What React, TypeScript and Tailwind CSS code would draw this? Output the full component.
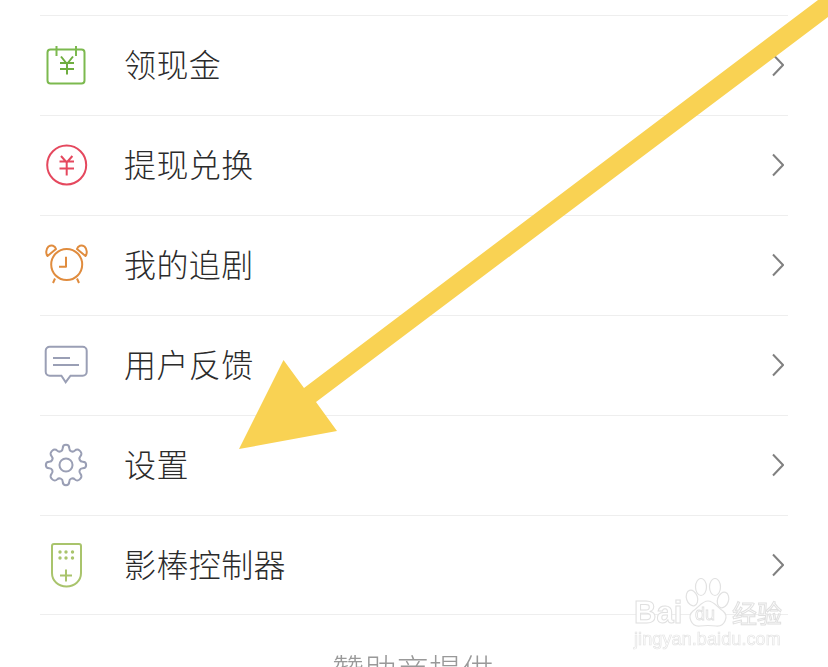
import type { ReactNode } from 'react'

const CJK = "font-['Noto_Sans_CJK_SC','Noto_Sans',sans-serif]"
const LATIN = "font-['Liberation_Sans',sans-serif]"

function CalendarIcon() {
  return (
    <svg width="48" height="48" viewBox="0 0 48 48" fill="none" stroke="#7cb94f" strokeWidth="2">
      <rect x="5.5" y="8.5" width="37" height="34" rx="3" />
      <path d="M14.5 5v10M34 5v10" />
      <path d="M19 15.500 25 23l6-7.500M25 23v10.500M18 22h14M18 28h14" stroke="#6fae3f" />
    </svg>
  )
}

function YuanIcon() {
  return (
    <svg width="48" height="48" viewBox="0 0 48 48" fill="none" stroke="#e5485e" strokeWidth="2">
      <circle cx="24.7" cy="24" r="19.5" />
      <path d="M19 15 24.700 21.500 30.400 15M24.700 21.500V34.500M17.500 20.500h14.500M17.500 27.500h14.500" />
    </svg>
  )
}

function AlarmIcon() {
  return (
    <svg width="48" height="48" viewBox="0 0 48 48" fill="none" stroke="#e08c3e" strokeWidth="2" strokeLinejoin="round">
      <circle cx="24.7" cy="23.500" r="15.500" />
      <path d="M24 15.700v10h-7" />
      <path d="M5.500 15C3.500 12.500 4 8 6.500 5.500 9.500 3.500 13 4.500 14 8Z" />
      <path d="M43.500 15C45.500 12.500 45 8 42.500 5.500 39.500 3.500 36 4.500 35 8Z" />
      <path d="M13 37.500 11 42M35 37.500 37 42" />
    </svg>
  )
}

function FeedbackIcon() {
  return (
    <svg width="48" height="48" viewBox="0 0 48 48" fill="none" stroke="#9a9fb5" strokeWidth="2">
      <path d="M7.700 5.700h33a4 4 0 0 1 4 4v21a4 4 0 0 1-4 4H28.500l-4.800 6.500-4.300-6.500H7.700a4 4 0 0 1-4-4v-21a4 4 0 0 1 4-4Z" />
      <path d="M11 17h17M11 24h26" />
    </svg>
  )
}

// eight rounded teeth around the centre, same shape as the reference gear
function GearIcon() {
  return (
    <svg width="48" height="48" viewBox="-0.5 -0.5 25 25" fill="none" stroke="#9a9fb5" strokeWidth="1.050" strokeLinejoin="round">
      <path d="M12 1.500c1 0 1.700.8 1.700 1.800 0 1.500 1.800 2.300 2.900 1.200.7-.7 1.800-.7 2.500 0l.4.400c.7.700.7 1.800 0 2.500-1.100 1.100-.3 2.900 1.200 2.900 1 0 1.800.7 1.800 1.700s-.8 1.700-1.800 1.700c-1.500 0-2.300 1.800-1.200 2.900.7.700.7 1.800 0 2.500l-.4.400c-.7.700-1.800.7-2.500 0-1.100-1.100-2.900-.3-2.900 1.200 0 1-.7 1.800-1.700 1.800s-1.700-.8-1.700-1.800c0-1.500-1.800-2.300-2.900-1.200-.7.700-1.800.7-2.500 0l-.4-.4c-.7-.7-.7-1.800 0-2.500 1.100-1.100.3-2.900-1.200-2.900-1 0-1.800-.7-1.800-1.700s.8-1.700 1.800-1.700c1.500 0 2.300-1.800 1.200-2.900-.7-.7-.7-1.800 0-2.500l.4-.4c.7-.7 1.800-.7 2.500 0 1.100 1.100 2.900.3 2.900-1.200 0-1 .7-1.800 1.700-1.800Z" />
      <circle cx="12" cy="12" r="3.400" />
    </svg>
  )
}

function RemoteIcon() {
  return (
    <svg width="48" height="48" viewBox="0 0 48 48" fill="none" stroke="#a9c46c" strokeWidth="2">
      <path d="M12 3h25a2 2 0 0 1 2 2v27c0 8-6.500 13.500-14.500 13.500S10 40 10 32V5a2 2 0 0 1 2-2Z" />
      <path d="M18 34.500h12M24 28.500v12" />
      <g fill="#a9c46c" stroke="none">
        <circle cx="18" cy="11" r="1.700" />
        <circle cx="24" cy="11" r="1.700" />
        <circle cx="30.500" cy="11" r="1.700" />
        <circle cx="18" cy="17" r="1.700" />
        <circle cx="24" cy="17" r="1.700" />
        <circle cx="30.500" cy="17" r="1.700" />
      </g>
    </svg>
  )
}

function Chevron() {
  return (
    <svg width="12" height="24" viewBox="0 0 12 24" fill="none" stroke="#808080" strokeWidth="2">
      <path d="M1 1.500 11 12 1 22.500" />
    </svg>
  )
}

function Row({ icon, label }: { icon: ReactNode; label: string }) {
  return (
    <div className="flex h-[100px] items-center border-t border-[#eeeeee] pb-[1px] last:h-[99px] last:pb-0">
      <div className="ml-[2px] w-[82px] shrink-0">{icon}</div>
      <span className="mb-[5px] flex-1 text-[32px] font-light leading-none tracking-[0.4px] text-[#2b2b2b]">
        {label}
      </span>
      <div className="mr-[4px]">
        <Chevron />
      </div>
    </div>
  )
}

const rows = [
  { label: '领现金', icon: <CalendarIcon /> },
  { label: '提现兑换', icon: <YuanIcon /> },
  { label: '我的追剧', icon: <AlarmIcon /> },
  { label: '用户反馈', icon: <FeedbackIcon /> },
  { label: '设置', icon: <GearIcon /> },
  { label: '影棒控制器', icon: <RemoteIcon /> },
]

function Arrow() {
  return (
    <svg className="absolute left-0 top-0" width="828" height="667" viewBox="0 0 828 667">
      <path fill="#f9d253" d="M239 449 283.500 360 304 388 818 0H828V17L316 402 337 431Z" />
    </svg>
  )
}

// faint baidu jingyan stamp, bottom right
function Watermark() {
  const outline = '[-webkit-text-stroke:1px_#e0e0e0]'
  return (
    <div className="absolute left-[634px] top-[578px] flex w-[150px] flex-col text-white blur-[0.4px]">
      <div className="flex h-[52px] items-start">
        <span className={`${LATIN} mt-[19px] w-[50px] text-[31px] font-bold leading-none ${outline}`}>Bai</span>
        <svg width="48" height="52" viewBox="0 0 48 52" fill="#fff" stroke="#e2e2e2" strokeWidth="1.200">
          <ellipse cx="8" cy="20" rx="5.500" ry="8" transform="rotate(-18 8 20)" />
          <ellipse cx="17" cy="9" rx="5.500" ry="8.500" />
          <ellipse cx="31" cy="9" rx="5.500" ry="8.500" />
          <ellipse cx="39" cy="22" rx="5.500" ry="8" transform="rotate(18 39 22)" />
          <path d="M24 23c6 0 9 6 15 10 6 5 2 16-7 15-5-.6-11-.6-16 0-9 1-13-10-7-15 6-4 9-10 15-10Z" />
          <text x="11" y="42" fontSize="18" fontFamily="Liberation Sans" fill="#fff" stroke="#e0e0e0" strokeWidth="0.800">
            du
          </text>
        </svg>
        <span className={`${CJK} mt-[22px] text-[25px] leading-none ${outline}`}>经验</span>
      </div>
      <span className={`${LATIN} text-[18px] leading-none tracking-[0.1px] [-webkit-text-stroke:0.7px_#e4e4e4]`}>
        jingyan.baidu.com
      </span>
    </div>
  )
}

export default function App() {
  return (
    <div className={`${CJK} relative h-[667px] w-[828px] overflow-hidden bg-white`}>
      <div className="mx-[40px] pt-[15px]">
        <div>
          {rows.map((r) => (
            <Row key={r.label} icon={r.icon} label={r.label} />
          ))}
        </div>
        <div className="border-t border-[#eeeeee] pr-[2px] pt-[37px] text-center text-[32px] font-light leading-none tracking-[0.4px] text-[#999999] blur-[0.5px]">
          赞助商提供
        </div>
      </div>
      <Arrow />
      <Watermark />
    </div>
  )
}
